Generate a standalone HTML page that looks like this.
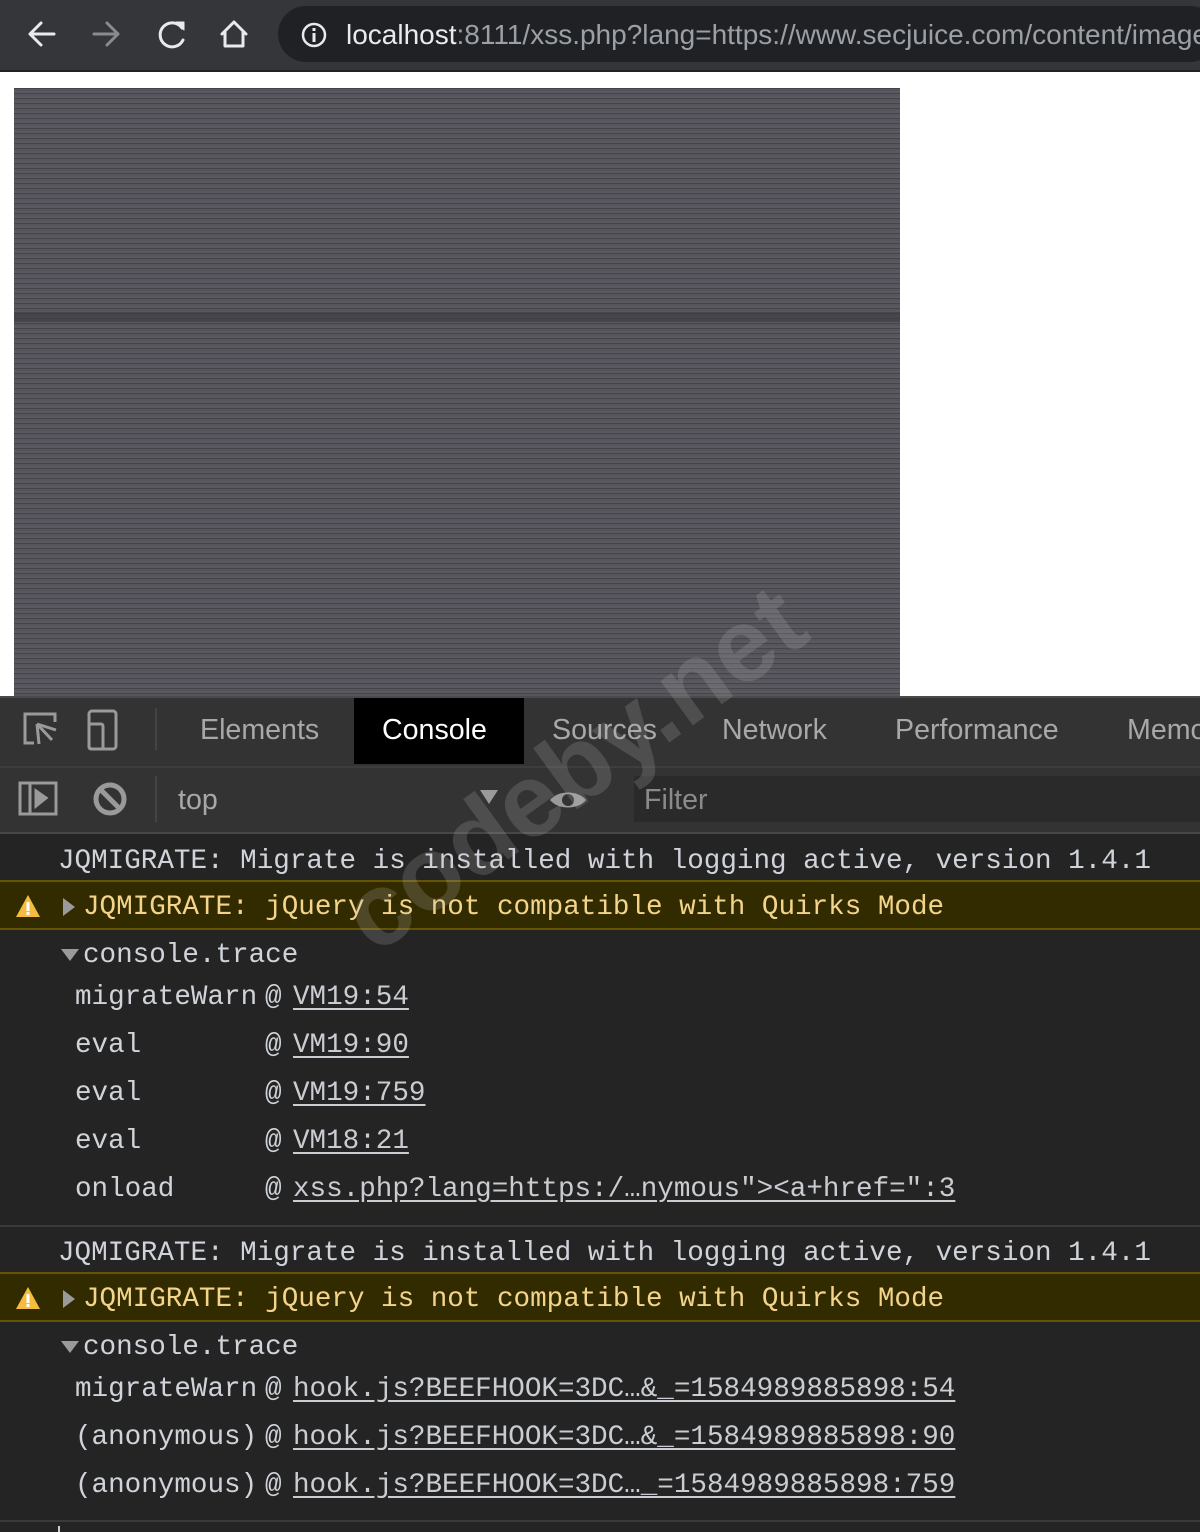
<!DOCTYPE html>
<html><head><meta charset="utf-8"><style>
*{margin:0;padding:0;box-sizing:border-box}
body{width:1200px;height:1532px;overflow:hidden;background:#242424;position:relative;font-family:"Liberation Sans",sans-serif}
.a{position:absolute;white-space:pre}
.m{font-family:"Liberation Mono","DejaVu Sans Mono",monospace;font-size:27.6px;line-height:36px;color:#d0d4da}
.y{color:#f3d48a}
.u{text-decoration:underline;text-underline-offset:4px;color:#c9ccd1}
.tab{font-size:28.6px;color:#a8a8a8;line-height:36px}
</style></head><body>
<div class="a" style="left:0;top:0;width:1200px;height:70px;background:#35363a"></div>
<div class="a" style="left:0;top:70px;width:1200px;height:2px;background:#202124"></div>
<svg class="a" style="left:0;top:0" width="280" height="70" fill="none" stroke-width="3" stroke-linecap="round" stroke-linejoin="round">
<path d="M54 34H30M41 23L30 34L41 45" stroke="#e8eaed"/>
<path d="M94 34H118M107 23L118 34L107 45" stroke="#8a8b8e"/>
<path d="M182 28A12 12 0 1 0 183 40" stroke="#e8eaed"/><path d="M176 22L184 22L184 30Z" fill="#e8eaed" stroke="#e8eaed" stroke-width="1"/>
<path d="M222 34L234 22L246 34M225 32V46H243V32" stroke="#e8eaed"/>
</svg>
<div class="a" style="left:278px;top:6px;width:940px;height:56px;border-radius:28px;background:#202124"></div>
<svg class="a" style="left:300px;top:21px" width="28" height="28"><circle cx="14" cy="14" r="11" fill="none" stroke="#e8eaed" stroke-width="2.5"/><rect x="12.5" y="12" width="3" height="9" fill="#e8eaed"/><rect x="12.5" y="7" width="3" height="3" fill="#e8eaed"/></svg>
<div class="a" style="left:346px;top:17px;font-size:28px;line-height:36px;color:#9aa0a6"><span style="color:#e8eaed">localhost</span>:8111/xss.php?lang=https://www.secjuice.com/content/images</div>
<div class="a" style="left:0;top:72px;width:1200px;height:624px;background:#fff"></div>
<div class="a" style="left:14px;top:88px;width:886px;height:608px;background:repeating-linear-gradient(0deg,#56555b 0 2px,#45444a 2px 3px,#5a5860 3px 5px),repeating-linear-gradient(90deg,rgba(0,0,0,.12) 0 3px,transparent 3px 7px),#525157"></div>
<div class="a" style="left:14px;top:312px;width:886px;height:10px;background:#3a3a40;opacity:.6"></div>
<div class="a" style="left:0;top:696px;width:1200px;height:70px;background:#333;border-top:2px solid #4a4a4a"></div>
<div class="a" style="left:0;top:766px;width:1200px;height:2px;background:#3d3d3d"></div>
<div class="a" style="left:354px;top:698px;width:170px;height:66px;background:#000"></div>
<svg class="a" style="left:20px;top:708px" width="120" height="46" fill="none" stroke="#9a9a9a" stroke-width="3"><path d="M14 35H5V6H35V14"/><path d="M17 16L32 32M17 16L19 36M17 16L36 22" /><rect x="69" y="3" width="27" height="38" rx="3"/><rect x="69" y="16" width="14" height="25" rx="2"/></svg>
<div class="a" style="left:155px;top:708px;width:2px;height:42px;background:#444"></div>
<div class="a tab" style="left:200px;top:712px">Elements</div>
<div class="a tab" style="left:382px;top:712px;color:#fff">Console</div>
<div class="a tab" style="left:552px;top:712px">Sources</div>
<div class="a tab" style="left:722px;top:712px">Network</div>
<div class="a tab" style="left:895px;top:712px">Performance</div>
<div class="a tab" style="left:1127px;top:712px">Memory</div>
<div class="a" style="left:0;top:768px;width:1200px;height:64px;background:#333"></div>
<div class="a" style="left:0;top:832px;width:1200px;height:2px;background:#474747"></div>
<svg class="a" style="left:18px;top:780px" width="110" height="40" fill="none" stroke="#9a9a9a" stroke-width="3"><rect x="2" y="3" width="36" height="31"/><path d="M12 3V34"/><path d="M18 11L28 18L18 26Z" fill="#9a9a9a"/><circle cx="92" cy="19" r="14" stroke-width="5"/><path d="M82 9L102 29" stroke-width="5"/></svg>
<div class="a" style="left:155px;top:776px;width:2px;height:46px;background:#444"></div>
<div class="a tab" style="left:178px;top:782px">top</div>
<svg class="a" style="left:478px;top:788px" width="120" height="24"><path d="M2 2H20L11 16Z" fill="#9a9a9a"/><path d="M72 12C80 2 100 2 108 12C100 22 80 22 72 12Z" fill="#9a9a9a"/><circle cx="90" cy="12" r="6" fill="#333"/></svg>
<div class="a" style="left:634px;top:776px;width:566px;height:46px;background:#2a2a2a"></div>
<div class="a tab" style="left:644px;top:782px;color:#8a8a8a">Filter</div>
<div class="a m" style="left:58px;top:844px">JQMIGRATE: Migrate is installed with logging active, version 1.4.1</div>
<div class="a" style="left:0;top:880px;width:1200px;height:50px;background:#332b00;border-top:2px solid #665500;border-bottom:2px solid #665500"></div>
<svg class="a" style="left:15px;top:894px" width="26" height="24"><path d="M13 1L25 23H1Z" fill="#f4bd3e"/><rect x="11.5" y="8" width="3" height="9" fill="#fff"/><rect x="11.5" y="18" width="3" height="3" fill="#fff"/></svg>
<svg class="a" style="left:62px;top:897px" width="14" height="20"><path d="M1 1L13 10L1 19Z" fill="#9a9a9a"/></svg>
<div class="a m y" style="left:83px;top:890px">JQMIGRATE: jQuery is not compatible with Quirks Mode</div>
<svg class="a" style="left:60px;top:948px" width="20" height="14"><path d="M1 1H19L10 13Z" fill="#9a9a9a"/></svg>
<div class="a m" style="left:83px;top:938px">console.trace</div>
<div class="a m" style="left:75px;top:980px">migrateWarn</div><div class="a m" style="left:265px;top:980px">@</div><div class="a m u" style="left:293px;top:980px">VM19:54</div>
<div class="a m" style="left:75px;top:1028px">eval</div><div class="a m" style="left:265px;top:1028px">@</div><div class="a m u" style="left:293px;top:1028px">VM19:90</div>
<div class="a m" style="left:75px;top:1076px">eval</div><div class="a m" style="left:265px;top:1076px">@</div><div class="a m u" style="left:293px;top:1076px">VM19:759</div>
<div class="a m" style="left:75px;top:1124px">eval</div><div class="a m" style="left:265px;top:1124px">@</div><div class="a m u" style="left:293px;top:1124px">VM18:21</div>
<div class="a m" style="left:75px;top:1172px">onload</div><div class="a m" style="left:265px;top:1172px">@</div><div class="a m u" style="left:293px;top:1172px">xss.php?lang=https:/…nymous"&gt;&lt;a+href=":3</div>
<div class="a" style="left:0;top:1225px;width:1200px;height:2px;background:#3a3a3a"></div>
<div class="a m" style="left:58px;top:1236px">JQMIGRATE: Migrate is installed with logging active, version 1.4.1</div>
<div class="a" style="left:0;top:1272px;width:1200px;height:50px;background:#332b00;border-top:2px solid #665500;border-bottom:2px solid #665500"></div>
<svg class="a" style="left:15px;top:1286px" width="26" height="24"><path d="M13 1L25 23H1Z" fill="#f4bd3e"/><rect x="11.5" y="8" width="3" height="9" fill="#fff"/><rect x="11.5" y="18" width="3" height="3" fill="#fff"/></svg>
<svg class="a" style="left:62px;top:1289px" width="14" height="20"><path d="M1 1L13 10L1 19Z" fill="#9a9a9a"/></svg>
<div class="a m y" style="left:83px;top:1282px">JQMIGRATE: jQuery is not compatible with Quirks Mode</div>
<svg class="a" style="left:60px;top:1340px" width="20" height="14"><path d="M1 1H19L10 13Z" fill="#9a9a9a"/></svg>
<div class="a m" style="left:83px;top:1330px">console.trace</div>
<div class="a m" style="left:75px;top:1372px">migrateWarn</div><div class="a m" style="left:265px;top:1372px">@</div><div class="a m u" style="left:293px;top:1372px">hook.js?BEEFHOOK=3DC…&amp;_=1584989885898:54</div>
<div class="a m" style="left:75px;top:1420px">(anonymous)</div><div class="a m" style="left:265px;top:1420px">@</div><div class="a m u" style="left:293px;top:1420px">hook.js?BEEFHOOK=3DC…&amp;_=1584989885898:90</div>
<div class="a m" style="left:75px;top:1468px">(anonymous)</div><div class="a m" style="left:265px;top:1468px">@</div><div class="a m u" style="left:293px;top:1468px">hook.js?BEEFHOOK=3DC…_=1584989885898:759</div>
<div class="a" style="left:0;top:1520px;width:1200px;height:2px;background:#3a3a3a"></div>
<div class="a" style="left:58px;top:1526px;width:2px;height:6px;background:#ccc"></div>
<div class="a" style="left:320px;top:880px;font-size:104px;font-weight:bold;color:rgba(190,190,190,.2);transform:rotate(-36deg);transform-origin:0 0;white-space:nowrap">codeby.net</div>
</body></html>
